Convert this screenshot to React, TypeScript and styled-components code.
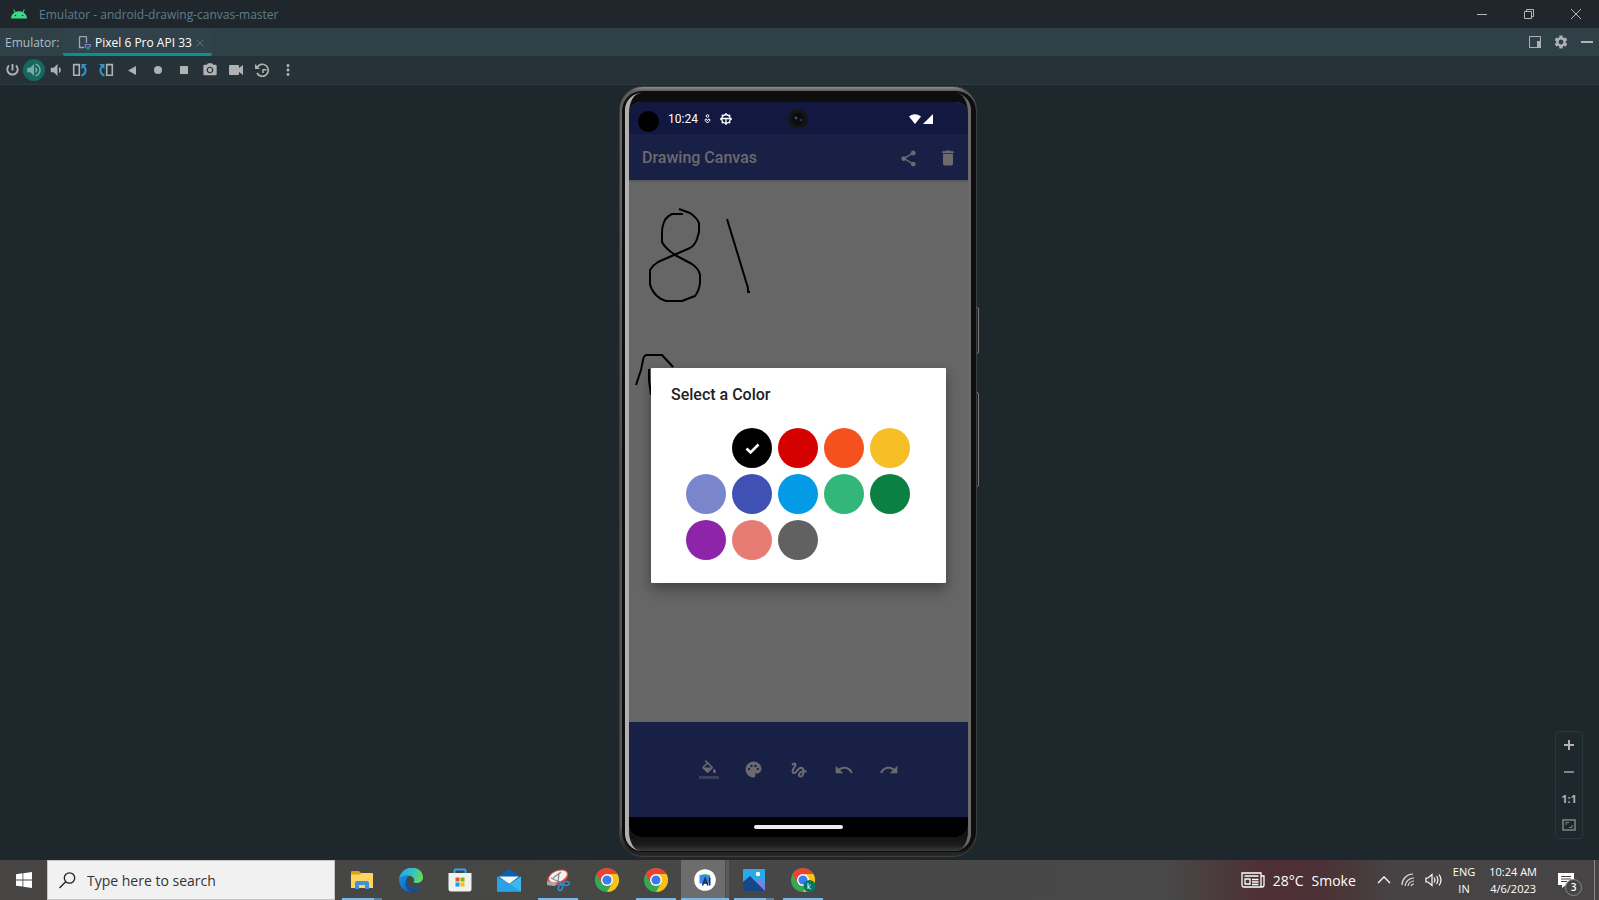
import React from 'react';
import styled, { createGlobalStyle, css } from 'styled-components';
import {
  MdShare, MdDelete, MdPalette, MdGesture, MdUndo, MdRedo,
  MdCameraAlt, MdMoreVert, MdSettings, MdVolumeUp, MdVolumeDown,
} from 'react-icons/md';

const GlobalStyle = createGlobalStyle`
  * { box-sizing: border-box; }
  body { margin: 0; background: #1e272c; font-family: "Open Sans", "Noto Sans", sans-serif; }
  button { border: 0; padding: 0; margin: 0; background: none; color: inherit; font: inherit; display: inline-flex; align-items: center; justify-content: center; }
  svg { display: block; flex: none; }
`;

const Page = styled.div`
  min-height: 100vh;
  display: flex;
  flex-direction: column;
  color: #afb1b3;
`;

/* ---------- IDE window chrome ---------- */
const TitleBar = styled.header`
  height: 28px;
  display: flex;
  align-items: center;
  padding-left: 11px;
  background: #1f272c;
`;
const WindowTitle = styled.h1`
  flex: 1;
  margin: 0 0 0 12px;
  padding-top: 2px;
  font-size: 12px;
  line-height: 16px;
  font-weight: 400;
  color: #607d8b;
`;
const CaptionButton = styled.button`
  width: 47px;
  height: 28px;
  color: #b4b6b8;
`;
const TabBar = styled.nav`
  height: 28px;
  display: flex;
  align-items: stretch;
  padding: 0 6px 0 5px;
  background: #304047;
  font-size: 12px;
`;
const TabLabel = styled.span`
  width: 58px;
  line-height: 30px;
  color: #b0bec5;
`;
const Tab = styled.div`
  width: 149px;
  display: flex;
  align-items: center;
  padding-left: 15px;
  color: #fff;
  background: #32424a;
  border-bottom: 3px solid #009688;
  border-radius: 0 0 2px 2px;
`;
const TabName = styled.button`
  gap: 4px;
  margin-top: 4px;
`;
const TabClose = styled.button`
  margin: 4px 0 0 4px;
  color: #5f717a;
`;
const TabTools = styled.div`
  margin-left: auto;
  display: flex;
  align-items: center;
  gap: 12px;
`;
const ToolBar = styled.div`
  height: 29px;
  display: flex;
  align-items: center;
  background: #263238;
  border-bottom: 1px solid #2c3b41;
`;
const Tool = styled.button<{ $on?: boolean; $w?: number }>`
  width: ${p => p.$w ?? 26}px;
  height: 22px;
  ${p => p.$on && css`background: #16685f; border-radius: 50%; color: #7fa8a4;`}
`;

/* ---------- Emulator workspace ---------- */
const Workspace = styled.main`
  position: relative;
  flex: 1;
  display: flex;
  justify-content: center;
  padding: 1px 0 3px;
  background: #1e272c;
`;
const Device = styled.section`
  position: relative;
  display: flex;
  padding-right: 3px;
`;
const SideKey = styled.span<{ $top: number; $size: number }>`
  position: absolute;
  right: 1px;
  top: ${p => p.$top}%;
  height: ${p => p.$size}%;
  width: 3px;
  background: #222;
  border: 1px solid #77787a;
  border-radius: 0 2px 2px 0;
`;
const Shell = styled.div`
  position: relative;
  width: 358px;
  display: flex;
  padding: 4px 1px 4px 2px;
  border: 1px solid #3d3e3f;
  border-radius: 24px;
  background: linear-gradient(to bottom, #8d8b8b 0, #5c5b5b 4px, #6a6969 40px, #4c4c4c 50%, #5a5a5a calc(100% - 30px), #1d1d1d calc(100% - 6px), #2a2a2a 100%);
`;
const Rim = styled.div`
  flex: 1;
  display: flex;
  padding: 2px 5px 1px 3px;
  background: #0e0e0e;
  border-radius: 20px;
`;
const Glass = styled.div`
  flex: 1;
  display: flex;
  padding: 0 3px 0 4px;
  border-radius: 17px;
  background: linear-gradient(to right, #b3b0b0 0, #a5a2a2 20px, #666 calc(100% - 20px), #6c6a6a 100%);
`;
const Bezel = styled.div`
  flex: 1;
  display: flex;
  padding: 9px 0 14px;
  border-radius: 12px / 20px;
  background: linear-gradient(to bottom, #0d0d0d 0, #111 calc(100% - 15px), #1c1c1c calc(100% - 6px), #3b3b3b 100%);
`;
const Screen = styled.div`
  position: relative;
  flex: 1;
  display: flex;
  flex-direction: column;
  overflow: hidden;
  border-radius: 12px;
  background: #666;
  font-family: Roboto, sans-serif;
`;
const StatusBar = styled.div`
  height: 32px;
  display: flex;
  align-items: center;
  padding: 2px 35px 0 9px;
  background: #131840;
  color: #fff;
  font-size: 12px;
`;
const Lens = styled.span`
  width: 21px;
  height: 21px;
  margin-top: 5px;
  border-radius: 50%;
  background: #000;
`;
const Clock = styled.time`
  margin: 0 6px 0 9px;
`;
const StatusIcons = styled.span`
  display: flex;
  align-items: center;
  gap: 9px;
`;
const Signal = styled.span`
  display: flex;
  align-items: center;
  gap: 2px;
  margin-left: auto;
`;
const Camera = styled.span`
  position: absolute;
  top: 7px;
  left: 50%;
  width: 20px;
  height: 20px;
  margin-left: -11px;
  border-radius: 50%;
  background: radial-gradient(circle at 8px 9px, #99a 0, #334 1px, transparent 2px), radial-gradient(circle at 13px 11px, #2e4c6c 0, transparent 2px), radial-gradient(circle, #090b10 0 5px, #151515 7px);
`;
const AppBar = styled.div`
  height: 46px;
  display: flex;
  align-items: center;
  padding: 2px 10px 0 13px;
  background: #192046;
  color: #6b6b6f;
  box-shadow: 0 1px 2px rgba(0, 0, 0, .2);
  z-index: 1;
`;
const AppTitle = styled.h2`
  flex: 1;
  margin: 0;
  font-size: 16px;
  line-height: 20px;
  font-weight: 500;
`;
const AppActions = styled.div`
  display: flex;
  align-items: center;
  height: 18px;
  gap: 20px;
`;
const Sketch = styled.div`
  position: relative;
  flex: 1;
  overflow: hidden;
  background: #666;
`;
const PaintBar = styled.div`
  height: 95px;
  display: flex;
  align-items: center;
  justify-content: center;
  gap: 25px;
  background: #192046;
  color: #6b6b6f;
`;
const PaintTool = styled.button`
  width: 20px;
  height: 20px;
`;
const NavBar = styled.div`
  height: 20px;
  display: flex;
  align-items: center;
  justify-content: center;
  background: #000;
`;
const HomePill = styled.span`
  width: 89px;
  height: 4px;
  border-radius: 2px;
  background: #ececec;
`;
const Dialog = styled.div`
  position: absolute;
  z-index: 2;
  top: 266px;
  left: 22px;
  right: 22px;
  height: 215px;
  padding: 16px 20px;
  border-radius: 1px;
  background: #fff;
  color: #212121;
  box-shadow: 0 8px 14px rgba(0, 0, 0, .26), 0 2px 10px rgba(0, 0, 0, .12);
`;
const DialogTitle = styled.h3`
  margin: 0;
  font-size: 16px;
  line-height: 22px;
  font-weight: 500;
`;
const Palette = styled.div`
  display: grid;
  grid-template-columns: repeat(5, 40px);
  gap: 6px;
  margin: 22px 0 0 15px;
`;
const Swatch = styled.button<{ $color: string }>`
  width: 40px;
  height: 40px;
  border-radius: 50%;
  background: ${p => p.$color};
  color: #fff;
`;
const ZoomPanel = styled.aside`
  position: absolute;
  right: 16px;
  bottom: 21px;
  width: 28px;
  height: 108px;
  display: flex;
  flex-direction: column;
  border: 1px solid #2a373e;
  border-radius: 4px;
  font-size: 11px;
  font-weight: 700;
`;
const ZoomButton = styled.button`
  flex: 1;
`;

/* ---------- Desktop taskbar ---------- */
const Taskbar = styled.footer`
  height: 40px;
  display: flex;
  align-items: stretch;
  color: #fff;
  background: linear-gradient(to right, #464544 0, #474847 73%, #4e2f35 79%, #4b3236 83%, #464344 87%, #464544 100%);
`;
const StartButton = styled.button`
  width: 47px;
`;
const SearchBox = styled.label`
  width: 288px;
  display: flex;
  align-items: center;
  gap: 11px;
  padding-left: 11px;
  background: #f1f1f1;
  border: 1px solid #c4c4c4;
  margin-right: 2px;
`;
const SearchInput = styled.input`
  width: 200px;
  border: 0;
  padding: 2px 0 0;
  outline: 0;
  background: transparent;
  font: 14px/20px "Open Sans", sans-serif;
  color: #333;
  &::placeholder { color: #333; opacity: 1; }
`;
const TaskApp = styled.button<{ $active?: boolean; $open?: boolean; $stacked?: boolean }>`
  position: relative;
  width: 49px;
  ${p => p.$active && css`background: linear-gradient(to right, transparent 1px, #6d6d6d 1px 45px, #4c4c4c 45px 46px, #5a5a5a 46px);`}
  ${p => p.$open && css`
    &::after {
      content: '';
      position: absolute;
      bottom: 0;
      left: ${p.$active ? 1 : 5}px;
      right: ${p.$active ? 0 : 4}px;
      height: 2px;
      background: ${p.$stacked ? 'linear-gradient(to right, #76b9ed calc(100% - 8px), #5583a6 calc(100% - 8px))' : '#76b9ed'};
    }
  `}
`;
const Tray = styled.div`
  margin-left: auto;
  display: flex;
  align-items: center;
  font-size: 14px;
`;
const Weather = styled.button`
  gap: 8px;
  margin-right: 21px;
`;
const TrayIcons = styled.div`
  display: flex;
  align-items: center;
  gap: 10px;
`;
const Stack = styled.div`
  padding-right: 4px;
  margin-left: 10px;
  text-align: center;
  font-size: 11px;
  line-height: 17px;
`;
const Notice = styled.button`
  position: relative;
  height: 40px;
  margin: 0 20px 0 17px;
`;
const Count = styled.span`
  position: absolute;
  left: 7px;
  top: 19px;
  width: 17px;
  height: 17px;
  border: 1px solid #8a8a8a;
  border-radius: 50%;
  background: #464544;
  font-size: 10px;
  line-height: 15px;
  font-weight: 600;
`;
const ShowDesktop = styled.button`
  width: 5px;
  height: 40px;
  border-left: 1px solid #8a8a8a;
`;

const Android = () => (
  <svg width="16" height="10" viewBox="0 0 16 10"><path d="M0 9.500a8 7.500 0 0 1 3.600-6.100L2.200.8l.8-.5 1.500 2.600a9 9 0 0 1 7 0L13 .3l.8.5-1.400 2.600A8 7.500 0 0 1 16 9.500z" fill="#3ddc84" /><circle cx="4.500" cy="6.500" r=".8" fill="#1f272c" /><circle cx="11.500" cy="6.500" r=".8" fill="#1f272c" /></svg>
);
const DeviceTabIcon = () => (
  <svg width="13" height="14" viewBox="0 0 13 14" fill="none"><path d="M8.500 7V1.500q0-1-1-1h-5q-1 0-1 1v10h4.500" stroke="#9aa7b0" strokeWidth="1.300" /><path d="M12.300 11V8.500h-5V12" stroke="#9876c8" strokeWidth="1.200" /><path d="M9 10h3v3.500H8z" fill="#009688" /></svg>
);
const PowerIcon = () => (
  <svg width="14" height="14" viewBox="0 0 14 14" fill="none" stroke="currentColor" strokeWidth="1.900"><path d="M7.500 1v6.500M4 2.500A5.200 5.200 0 1 0 11 2.500" /></svg>
);
const Rotate = ({ flip }: { flip?: boolean }) => (
  <svg width="16" height="14" viewBox="0 0 16 14" fill="none">
    <g transform={flip ? 'matrix(-1 0 0 1 16 0)' : undefined}>
      <path d="M1.700 1.600h5.600v10.600H1.700z" stroke="#afb1b3" strokeWidth="1.600" />
      <path d="M9.500 12.800C14.500 11 14.500 5.500 11.500 3" stroke="#3592c4" strokeWidth="2" />
      <path d="M9.500 1H15L9.500 6.200z" fill="#3592c4" />
    </g>
  </svg>
);
const FillIcon = () => (
  <svg width="20" height="20" viewBox="0 0 20 20">
    <path transform="translate(1 0) scale(.76)" fill="currentColor" d="M16.560 8.940L7.620 0 6.210 1.410l2.380 2.380-5.150 5.150c-.59.59-.59 1.540 0 2.120l5.500 5.500c.29.29.68.44 1.060.44s.77-.15 1.060-.44l5.500-5.500c.59-.58.59-1.530 0-2.120zM5.210 10L10 5.210 14.790 10H5.210zM19 11.500s-2 2.170-2 3.500c0 1.100.9 2 2 2s2-.9 2-2c0-1.330-2-3.500-2-3.500z" />
    <path d="M0 16h20v3H0z" fill="#3c3f5a" />
  </svg>
);
const Chrome = ({ badge }: { badge?: boolean }) => (
  <svg width="26" height="26" viewBox="0 0 26 26">
    <circle cx="13" cy="13" r="12" fill="#34a853" />
    <path d="M2.600 7A12 12 0 0 1 23.400 7L13 7.500 7.800 16z" fill="#ea4335" />
    <path d="M23.400 7A12 12 0 0 1 13 25l5.200-9L15 7z" fill="#fbc116" />
    <path d="M2.600 7l5.200 9 5 3z" fill="#34a853" />
    <path d="M2.600 7l5.200 9L13 8z" fill="#ea4335" />
    <circle cx="13" cy="13" r="6" fill="#fff" /><circle cx="13" cy="13" r="4.600" fill="#3b7ded" />
    {badge && <><circle cx="19.500" cy="19" r="6" fill="#00796b" /><path d="M18 16v6M20.800 17.800l-2.600 2.200 2.700 2" stroke="#fff" strokeWidth=".9" fill="none" /></>}
  </svg>
);
const Explorer = () => (
  <svg width="22" height="18" viewBox="0 0 22 18"><path d="M0 1q0-1 1-1h7l2 2v3H0z" fill="#e0a010" /><path d="M0 3.500h9L10.500 2H21q1 0 1 1v14H0z" fill="#ffd560" /><path d="M4 18v-6q0-2 2-2h10q2 0 2 2v6h-4v-4H8v4z" fill="#3b94d9" /></svg>
);
const Edge = () => (
  <svg width="24" height="24" viewBox="0 0 24 24">
    <defs>
      <linearGradient id="edgeTop" x1="0" x2="1" y1=".3" y2=".5"><stop offset="0" stopColor="#2aa5e0" /><stop offset=".5" stopColor="#30bfc8" /><stop offset="1" stopColor="#62de55" /></linearGradient>
      <linearGradient id="edgeBody" x1="0" x2="1" y1="0" y2="1"><stop offset="0" stopColor="#1b8ee0" /><stop offset="1" stopColor="#0c59a4" /></linearGradient>
    </defs>
    <path d="M0 12C1-4 24-4 24 9.500c0 6-8 6.500-9.500 4.500 1.500-2 .5-5-3-6C7 7 1 9 0 12z" fill="url(#edgeTop)" />
    <path d="M0 12c1-4 6-5.500 10-4C6 10 7 17 12 19.500c4 2 8 0 10.500-1.500C18 26 1 27 0 12z" fill="url(#edgeBody)" />
    <path d="M10 8.500c-5 4-1.500 10.500 3.500 11.500 3.500.7 7-.5 9-2-2 3.500-5.500 5.800-9 6C6 23 4 12 10 8.500z" fill="#0d4f9c" />
  </svg>
);
const Store = () => (
  <svg width="24" height="24" viewBox="0 0 24 24"><path d="M6.500 6V2.500q0-1 1-1h9q1 0 1 1V6" stroke="#27a9e8" strokeWidth="2" fill="none" /><path d="M.5 5h23v16q0 2.500-2.500 2.500H3Q.5 23.500.5 21z" fill="#f1f1f1" /><path d="M7.500 9.500h4v4h-4z" fill="#f25022" /><path d="M12.500 9.500h4v4h-4z" fill="#7fba00" /><path d="M7.500 14.500h4v4h-4z" fill="#00a4ef" /><path d="M12.500 14.500h4v4h-4z" fill="#ffb900" /></svg>
);
const Mail = () => (
  <svg width="24" height="24" viewBox="0 0 24 24"><path d="M0 9l12-8 12 8-12 5z" fill="#0a60b5" /><path d="M2 8.500h20L12 16z" fill="#f4f4f4" /><path d="M0 8.500L24 23H0z" fill="#1f9ae0" /><path d="M24 8.500L0 23.500h24z" fill="#3db9f2" /><path d="M0 8.500l12 7L24 23.500H0z" fill="#2aa2e6" /></svg>
);
const Snip = () => (
  <svg width="24" height="24" viewBox="0 0 24 24" fill="none"><ellipse cx="11.500" cy="10" rx="11" ry="6.800" transform="rotate(-22 11.500 10)" fill="#d23c3c" /><ellipse cx="12" cy="8.500" rx="10" ry="5.800" transform="rotate(-22 12 8.500)" fill="#f2f2f2" stroke="#d94b4b" /><path d="M1 13v4l7 1 4-2z" fill="#aaa" /><path d="M5 10l10 5M13 5l-1 9M15 4l-8 6" stroke="#888" strokeWidth="1.300" /><ellipse cx="14.500" cy="19.500" rx="2" ry="3" transform="rotate(25 14.500 19.500)" stroke="#2c8fd0" strokeWidth="1.600" /><ellipse cx="20.500" cy="15.500" rx="3" ry="2" stroke="#2c8fd0" strokeWidth="1.600" /><path d="M12 13l4 3.500 2-.5" stroke="#2c8fd0" strokeWidth="1.600" /></svg>
);
const Studio = () => (
  <svg width="22" height="22" viewBox="0 0 22 22"><circle cx="11" cy="11" r="10.800" fill="#fff" /><path d="M7 6.500a4.500 3 0 0 1 8 0z" fill="#3ddc84" /><path d="M5.500 6h10.500v8.500H5.500z" fill="#3b87ea" /><path d="M8.500 16.500l2.700-7 2.700 7M9.500 14h3.500M15.700 8.500v8" stroke="#0b2f55" strokeWidth="1.500" fill="none" /></svg>
);
const Photos = () => (
  <svg width="22" height="22" viewBox="0 0 22 22"><path d="M0 0h22v22H0z" fill="#2ba7ec" /><path d="M10 22v-6l6.500-6 5.500 5v7z" fill="#7a7fe0" /><path d="M0 13l7-6 15 15H0z" fill="#174787" /><circle cx="15" cy="5" r="2.200" fill="#fff" /></svg>
);

const swatches = [
  ['White', '#ffffff'], ['Black', '#000000'], ['Red', '#d50000'], ['Orange', '#f4511e'], ['Yellow', '#f6bf26'],
  ['Lavender', '#7986cb'], ['Indigo', '#3f51b5'], ['Blue', '#039be5'], ['Light green', '#33b679'], ['Green', '#0b8043'],
  ['Purple', '#8e24aa'], ['Pink', '#e67c73'], ['Gray', '#616161'],
];

export default function App() {
  return (
    <Page>
      <GlobalStyle />
      <TitleBar>
        <Android />
        <WindowTitle>Emulator - android-drawing-canvas-master</WindowTitle>
        <CaptionButton aria-label="Minimize"><svg width="10" height="10"><path d="M0 5.500h10" stroke="currentColor" /></svg></CaptionButton>
        <CaptionButton aria-label="Restore"><svg width="10" height="10" fill="none" stroke="currentColor"><path d="M.5 2.500h7v7h-7zM2.500 2.500v-2h7v7h-2" /></svg></CaptionButton>
        <CaptionButton aria-label="Close"><svg width="10" height="10" stroke="currentColor"><path d="M0 0l10 10M10 0L0 10" /></svg></CaptionButton>
      </TitleBar>
      <TabBar>
        <TabLabel>Emulator:</TabLabel>
        <Tab>
          <TabName><DeviceTabIcon />Pixel 6 Pro API 33</TabName>
          <TabClose aria-label="Close tab"><svg width="8" height="8" stroke="currentColor"><path d="M.5.5l7 7M7.500.5l-7 7" /></svg></TabClose>
        </Tab>
        <TabTools>
          <button aria-label="Window mode"><svg width="12" height="12"><path d="M.5.5h11v11H.5z" fill="none" stroke="currentColor" /><path d="M8 5h4v7H8z" fill="currentColor" /></svg></button>
          <button aria-label="Settings"><MdSettings size={16} /></button>
          <button aria-label="Hide"><svg width="12" height="2"><path d="M0 0h12v2H0z" fill="currentColor" /></svg></button>
        </TabTools>
      </TabBar>
      <ToolBar>
        <Tool $w={23} aria-label="Power"><PowerIcon /></Tool>
        <Tool $w={22} $on aria-label="Volume up"><MdVolumeUp size={18} /></Tool>
        <Tool $w={22} aria-label="Volume down"><MdVolumeDown size={18} /></Tool>
        <Tool aria-label="Rotate left"><Rotate /></Tool>
        <Tool aria-label="Rotate right"><Rotate flip /></Tool>
        <Tool aria-label="Back"><svg width="8" height="9"><path d="M8 0v9L0 4.500z" fill="currentColor" /></svg></Tool>
        <Tool aria-label="Home"><svg width="8" height="8"><circle cx="4" cy="4" r="4" fill="currentColor" /></svg></Tool>
        <Tool aria-label="Overview"><svg width="8" height="8"><path d="M0 0h8v8H0z" fill="currentColor" /></svg></Tool>
        <Tool aria-label="Take screenshot"><MdCameraAlt size={16} /></Tool>
        <Tool aria-label="Record screen"><svg width="14" height="10"><path d="M1 0h8q1 0 1 1v2l4-3v10l-4-3v2q0 1-1 1H1q-1 0-1-1V1q0-1 1-1z" fill="currentColor" /></svg></Tool>
        <Tool aria-label="Snapshots"><svg width="15" height="14" viewBox="0 0 15 14" fill="none" stroke="currentColor"><path d="M2 4.500A6 6 0 1 1 2 10" strokeWidth="1.700" /><path d="M0 1v5h5z" fill="currentColor" stroke="none" /><path d="M8 10V6.700h3.500" strokeWidth="1.500" /></svg></Tool>
        <Tool aria-label="More"><MdMoreVert size={18} /></Tool>
      </ToolBar>

      <Workspace>
        <Device aria-label="Pixel 6 Pro">
          <SideKey $top={28.700} $size={6} />
          <SideKey $top={39.700} $size={12.300} />
          <Shell>
            <Rim>
              <Glass>
                <Bezel>
                  <Screen>
                    <StatusBar>
                      <Lens />
                      <Clock>10:24</Clock>
                      <StatusIcons>
                        <svg width="7" height="10" viewBox="0 0 7 10" fill="none" stroke="#fff"><circle cx="3.500" cy="2" r="1.300" /><path d="M3.500 9L.8 6l1.200-1.200L3.500 6.500 5 4.800 6.200 6z" /></svg>
                        <svg width="12" height="12" viewBox="0 0 12 12" fill="none" stroke="#fff"><circle cx="6" cy="6" r="4.300" strokeWidth="1.400" /><path d="M1.700 5.500h8.600M6 5.500v5M6 0v2M6 10.500V12M0 6h1.500M10.500 6H12M1.800 1.800L3 3M10.200 1.800L9 3M1.800 10.200L3 9M10.200 10.200L9 9" strokeWidth="1.300" /></svg>
                      </StatusIcons>
                      <Signal>
                        <svg width="12" height="10"><path d="M0 2.500Q6-2 12 2.500L6 10z" fill="#fff" /></svg>
                        <svg width="10" height="10"><path d="M10 0v10H0z" fill="#fff" /></svg>
                      </Signal>
                      <Camera />
                    </StatusBar>
                    <AppBar>
                      <AppTitle>Drawing Canvas</AppTitle>
                      <AppActions>
                        <button aria-label="Share"><MdShare size={19} /></button>
                        <button aria-label="Delete"><MdDelete size={20} /></button>
                      </AppActions>
                    </AppBar>
                    <Sketch>
                      <svg width="339" height="240" fill="none" stroke="#000" strokeWidth="2" strokeLinejoin="round">
                        <path d="M54 34H43Q37 37 35 42Q33 47 33 52V62Q36 68 46 75L63 84Q70 89 71 95V103Q70 111 66 116L53 121H37Q31 119 28 116Q22 110 21 104V90Q24 85 29 82L45 75 61 68Q66 65 68 59L70 52V43Q68 38 61 33L50 29" />
                        <path d="M98 39L119 108V112H121" />
                        <path d="M7 205L12 190 14 180Q15 175 18 175H33L44 187M20 189V200L22 215" />
                      </svg>
                    </Sketch>
                    <PaintBar>
                      <PaintTool aria-label="Fill"><FillIcon /></PaintTool>
                      <PaintTool aria-label="Color"><MdPalette size={19} /></PaintTool>
                      <PaintTool aria-label="Stroke"><MdGesture size={20} /></PaintTool>
                      <PaintTool aria-label="Undo"><MdUndo size={20} /></PaintTool>
                      <PaintTool aria-label="Redo"><MdRedo size={20} /></PaintTool>
                    </PaintBar>
                    <NavBar><HomePill /></NavBar>
                    <Dialog role="dialog" aria-labelledby="dialog-title">
                      <DialogTitle id="dialog-title">Select a Color</DialogTitle>
                      <Palette>
                        {swatches.map(([name, color]) => (
                          <Swatch key={name} $color={color} aria-label={name}>{name === 'Black' && <svg width="15" height="11" fill="none"><path d="M1.500 5.500l4 4L13.500 1.500" stroke="#fff" strokeWidth="2.600" /></svg>}</Swatch>
                        ))}
                      </Palette>
                    </Dialog>
                  </Screen>
                </Bezel>
              </Glass>
            </Rim>
          </Shell>
        </Device>
        <ZoomPanel>
          <ZoomButton aria-label="Zoom in"><svg width="10" height="10"><path d="M4 0h2v4h4v2H6v4H4V6H0V4h4z" fill="currentColor" /></svg></ZoomButton>
          <ZoomButton aria-label="Zoom out"><svg width="10" height="2"><path d="M0 0h10v2H0z" fill="#808486" /></svg></ZoomButton>
          <ZoomButton>1:1</ZoomButton>
          <ZoomButton aria-label="Fit to screen"><svg width="14" height="12" fill="none" stroke="#808486"><path d="M1 1h12v10H1z" strokeWidth="1.500" /><path d="M4 6V3.500h3M10 6v2.500H7" /></svg></ZoomButton>
        </ZoomPanel>
      </Workspace>

      <Taskbar>
        <StartButton aria-label="Start"><svg width="16" height="16" fill="#fff"><path d="M0 2.200l6.500-.9v6.200H0zM7.300 1.200L16 0v7.500H7.300zM0 8.400h6.500v6.200L0 13.700zM7.300 8.400H16V16l-8.700-1.200z" /></svg></StartButton>
        <SearchBox>
          <svg width="17" height="17" fill="none" stroke="#222" strokeWidth="1.300"><circle cx="10.500" cy="6" r="5.200" /><path d="M6.700 9.700L.5 16" /></svg>
          <SearchInput placeholder="Type here to search" aria-label="Search" />
        </SearchBox>
        <TaskApp $open $stacked aria-label="File Explorer"><Explorer /></TaskApp>
        <TaskApp aria-label="Edge"><Edge /></TaskApp>
        <TaskApp aria-label="Store"><Store /></TaskApp>
        <TaskApp aria-label="Mail"><Mail /></TaskApp>
        <TaskApp $open aria-label="Snipping Tool"><Snip /></TaskApp>
        <TaskApp aria-label="Chrome"><Chrome /></TaskApp>
        <TaskApp $open aria-label="Chrome window"><Chrome /></TaskApp>
        <TaskApp $open $active aria-label="Android Studio"><Studio /></TaskApp>
        <TaskApp $open $stacked aria-label="Photos"><Photos /></TaskApp>
        <TaskApp $open aria-label="Chrome profile"><Chrome badge /></TaskApp>
        <Tray>
          <Weather>
            <svg width="24" height="16" fill="none" stroke="#fff" strokeWidth="1.300"><path d="M1 1h19v14H3q-2 0-2-2zM20 4h3v9q0 2-2 2h-3M3.500 4h14M4 7h5v5H4zM11 7.500h6.500M11 10h6.500M11 12.500h6.500" /></svg>
            <span>28°C</span><span>Smoke</span>
          </Weather>
          <TrayIcons>
            <svg width="14" height="8" fill="none" stroke="#fff" strokeWidth="1.300"><path d="M1 7l6-6 6 6" /></svg>
            <svg width="14" height="14" fill="none" stroke="#ddd" strokeWidth="1.200"><path d="M1 12A11 11 0 0 1 12 1M4 13a9 9 0 0 1 9-8M7 13a6 6 0 0 1 6-5M10 13a3 3 0 0 1 3-2" /></svg>
            <svg width="18" height="14" fill="none" stroke="#fff" strokeWidth="1.200"><path d="M1 5h2l4-3.500v11L3 9H1zM9 4.500q2 2.500 0 5M11.500 3q3 4 0 8M14 1.500q4 5.500 0 11" /></svg>
          </TrayIcons>
          <Stack>ENG<br />IN</Stack>
          <Stack>10:24 AM<br />4/6/2023</Stack>
          <Notice aria-label="3 notifications"><svg width="16" height="15"><path d="M0 0h16v12H8l-4 3v-3H0z" fill="#fff" /><path d="M3 3.500h10M3 6h10M3 8.500h6" stroke="#464544" /></svg><Count>3</Count></Notice>
          <ShowDesktop aria-label="Show desktop" />
        </Tray>
      </Taskbar>
    </Page>
  );
}
